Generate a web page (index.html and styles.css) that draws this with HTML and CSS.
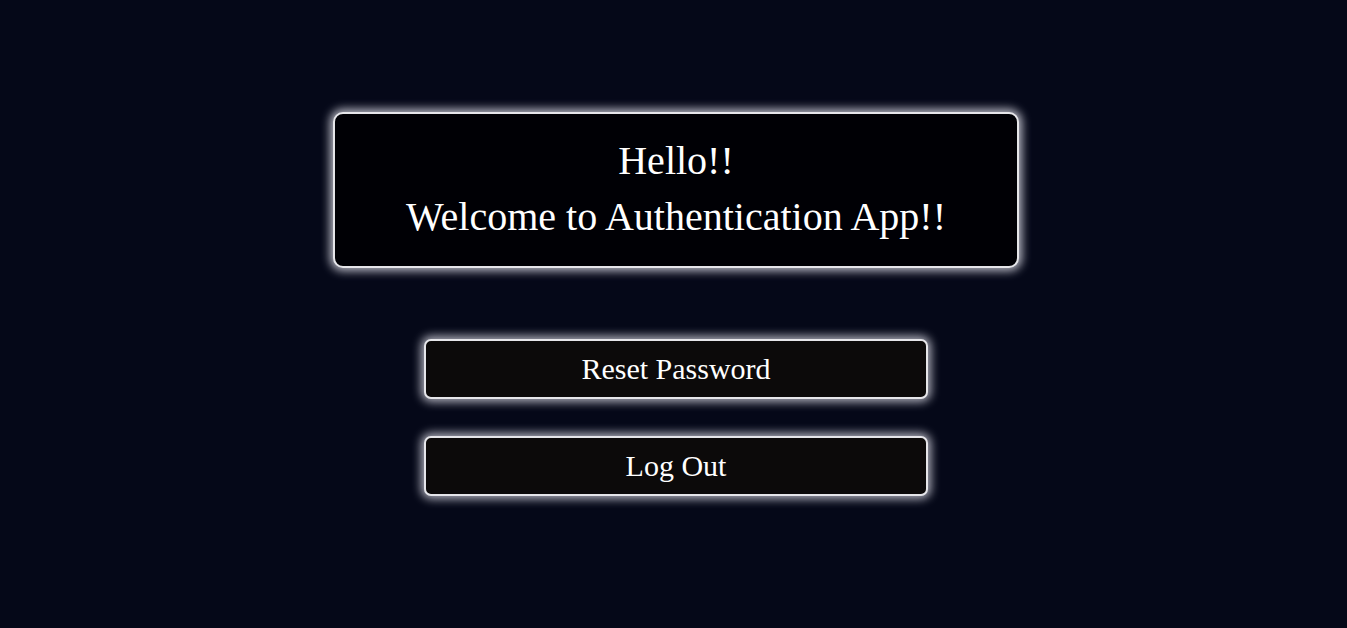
FILE: index.html
```html
<!DOCTYPE html>
<html>
<head>
<meta charset="utf-8">
<link rel="stylesheet" href="styles.css">
</head>
<body>
<main class="page">
  <section class="card">
    <h1 class="title">Hello!!</h1>
    <h1 class="title">Welcome to Authentication App!!</h1>
  </section>
  <div class="actions">
    <button class="btn">Reset Password</button>
    <button class="btn">Log Out</button>
  </div>
</main>
</body>
</html>
```
FILE: styles.css
```css
html, body {
  margin: 0;
  padding: 0;
  background: #050818;
  height: 100%;
}
.page {
  display: flex;
  flex-direction: column;
  align-items: center;
  padding-top: 112px;
  padding-left: 5px;
  font-family: "Liberation Serif", "Times New Roman", serif;
  color: #fff;
}
.card {
  box-sizing: border-box;
  width: 686px;
  height: 156px;
  background: #000005;
  border: 2px solid #e6e6ea;
  border-radius: 10px;
  box-shadow: 0 0 10px 3px rgba(230, 230, 240, 0.8);
  display: flex;
  flex-direction: column;
  align-items: center;
  padding-top: 19px;
}
.title {
  margin: 0;
  font-weight: normal;
  font-size: 40px;
  line-height: 56px;
}
.actions {
  margin-top: 71px;
  display: flex;
  flex-direction: column;
  gap: 37px;
}
.btn {
  box-sizing: border-box;
  width: 504px;
  height: 60px;
  background: #0c0a0a;
  color: #fff;
  border: 2px solid #e6e6ea;
  border-radius: 7px;
  box-shadow: 0 0 10px 3px rgba(230, 230, 240, 0.75);
  font-family: "Liberation Serif", "Times New Roman", serif;
  font-size: 30px;
  padding: 0;
}
```
